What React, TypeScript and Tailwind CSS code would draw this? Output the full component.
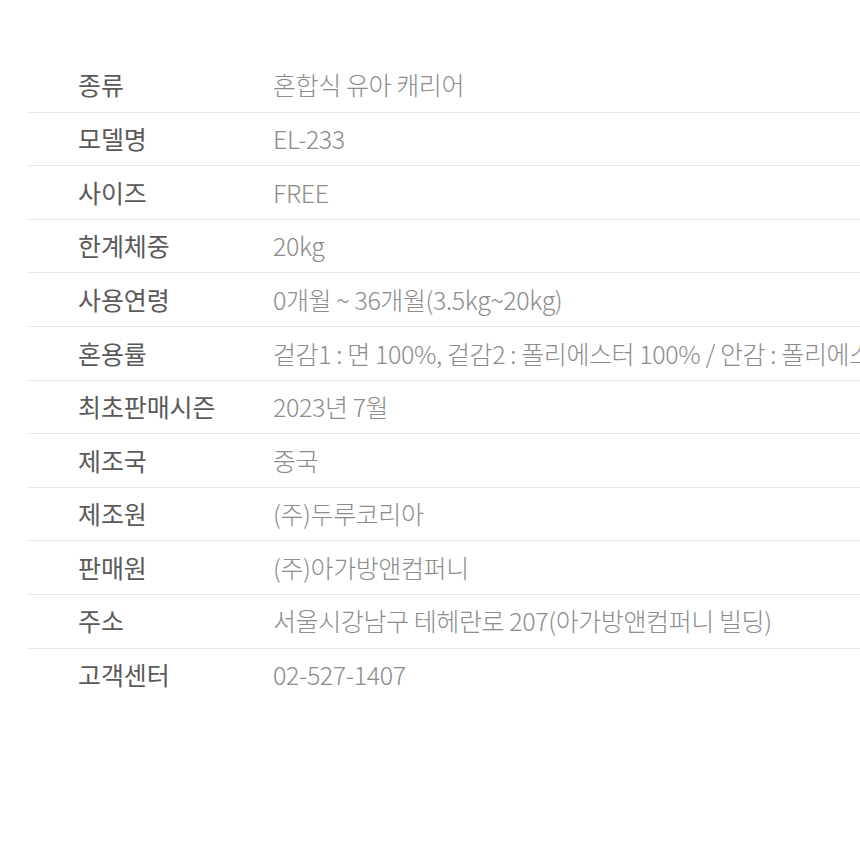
import React from "react";

const rows: [string, string][] = [
  ["종류", "혼합식 유아 캐리어"],
  ["모델명", "EL-233"],
  ["사이즈", "FREE"],
  ["한계체중", "20kg"],
  ["사용연령", "0개월 ~ 36개월(3.5kg~20kg)"],
  ["혼용률", "겉감1 : 면 100%, 겉감2 : 폴리에스터 100% / 안감 : 폴리에스터 100%"],
  ["최초판매시즌", "2023년 7월"],
  ["제조국", "중국"],
  ["제조원", "(주)두루코리아"],
  ["판매원", "(주)아가방앤컴퍼니"],
  ["주소", "서울시강남구 테헤란로 207(아가방앤컴퍼니 빌딩)"],
  ["고객센터", "02-527-1407"],
];

export default function App() {
  return (
    <div
      className="w-[860px] h-[859px] bg-white overflow-hidden"
      style={{ fontFamily: '"Noto Sans CJK KR", "Noto Sans", sans-serif' }}
    >
      <div className="pt-[58px] pl-[27px]">
        {rows.map(([k, v], i) => (
          <div
            key={k}
            className={`flex items-center h-[53.6px] box-border whitespace-nowrap overflow-hidden ${
              i > 0 ? "border-t-[1.5px] border-[#e6e9ec]" : ""
            }`}
          >
            <div className="w-[246px] shrink-0 pl-[51px] text-[25px] tracking-[-0.1px] text-[#5a5a5a] font-normal">
              {k}
            </div>
            <div className="shrink-0 text-[25px] tracking-[-0.4px] text-[#8c8c8c] font-light">{v}</div>
          </div>
        ))}
      </div>
    </div>
  );
}
